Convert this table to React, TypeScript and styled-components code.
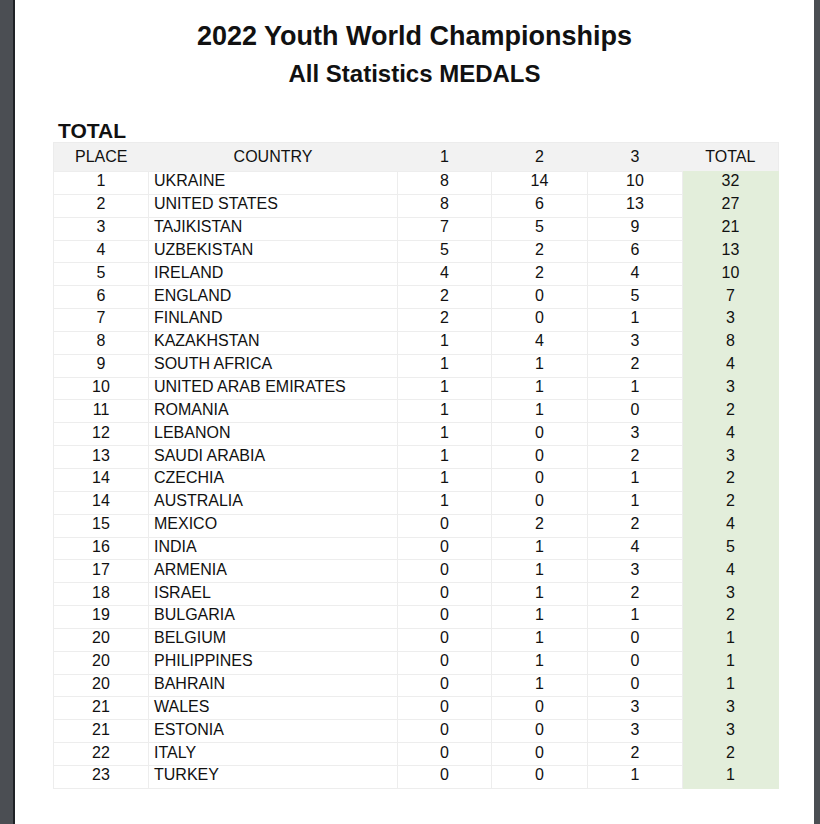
import styled, { createGlobalStyle } from "styled-components";

const GlobalStyle = createGlobalStyle`
  html, body {
    margin: 0;
    padding: 0;
    background: #4b4e53;
  }
  body {
    font-family: "Liberation Sans", Arial, sans-serif;
    color: #111;
  }
`;

type MedalRow = [string, string, number, number, number, number];

const rows: MedalRow[] = [
  ["1", "UKRAINE", 8, 14, 10, 32],
  ["2", "UNITED STATES", 8, 6, 13, 27],
  ["3", "TAJIKISTAN", 7, 5, 9, 21],
  ["4", "UZBEKISTAN", 5, 2, 6, 13],
  ["5", "IRELAND", 4, 2, 4, 10],
  ["6", "ENGLAND", 2, 0, 5, 7],
  ["7", "FINLAND", 2, 0, 1, 3],
  ["8", "KAZAKHSTAN", 1, 4, 3, 8],
  ["9", "SOUTH AFRICA", 1, 1, 2, 4],
  ["10", "UNITED ARAB EMIRATES", 1, 1, 1, 3],
  ["11", "ROMANIA", 1, 1, 0, 2],
  ["12", "LEBANON", 1, 0, 3, 4],
  ["13", "SAUDI ARABIA", 1, 0, 2, 3],
  ["14", "CZECHIA", 1, 0, 1, 2],
  ["14", "AUSTRALIA", 1, 0, 1, 2],
  ["15", "MEXICO", 0, 2, 2, 4],
  ["16", "INDIA", 0, 1, 4, 5],
  ["17", "ARMENIA", 0, 1, 3, 4],
  ["18", "ISRAEL", 0, 1, 2, 3],
  ["19", "BULGARIA", 0, 1, 1, 2],
  ["20", "BELGIUM", 0, 1, 0, 1],
  ["20", "PHILIPPINES", 0, 1, 0, 1],
  ["20", "BAHRAIN", 0, 1, 0, 1],
  ["21", "WALES", 0, 0, 3, 3],
  ["21", "ESTONIA", 0, 0, 3, 3],
  ["22", "ITALY", 0, 0, 2, 2],
  ["23", "TURKEY", 0, 0, 1, 1],
];

function App() {
  return (
    <>
      <GlobalStyle />
      <Viewer>
        <Page>
          <Title>2022 Youth World Championships</Title>
          <Subtitle>All Statistics MEDALS</Subtitle>
          <Section>
            <SectionLabel>TOTAL</SectionLabel>
            <Table>
              <colgroup>
                <col style={{ width: 95 }} />
                <col style={{ width: 249 }} />
                <col style={{ width: 94 }} />
                <col style={{ width: 96 }} />
                <col style={{ width: 95 }} />
                <col style={{ width: 96 }} />
              </colgroup>
              <thead>
                <tr>
                  <Th>PLACE</Th>
                  <Th>COUNTRY</Th>
                  <Th>1</Th>
                  <Th>2</Th>
                  <Th>3</Th>
                  <Th>TOTAL</Th>
                </tr>
              </thead>
              <tbody>
                {rows.map(([place, country, gold, silver, bronze, total], i) => (
                  <Tr key={i}>
                    <Td>{place}</Td>
                    <Td align="left">{country}</Td>
                    <Td>{gold}</Td>
                    <Td>{silver}</Td>
                    <Td>{bronze}</Td>
                    <Td highlight>{total}</Td>
                  </Tr>
                ))}
              </tbody>
            </Table>
          </Section>
        </Page>
      </Viewer>
    </>
  );
}

export default App;

const Viewer = styled.div`
  display: flex;
  min-height: 824px;
  padding-left: 13px;
  overflow: hidden;
`;

const Page = styled.div`
  width: 801px;
  flex-shrink: 0;
  background: #fff;
  border-left: 2px solid #1f2226;
  padding-top: 21px;
  min-height: 824px;
  box-sizing: border-box;
`;

const Title = styled.h1`
  margin: 0;
  text-align: center;
  font-size: 27px;
  line-height: 30px;
  font-weight: 700;
  color: #111;
`;

const Subtitle = styled.h2`
  margin: 9px 0 0;
  text-align: center;
  font-size: 24px;
  line-height: 28px;
  font-weight: 700;
  color: #111;
`;

const Section = styled.div`
  margin: 29px 38px 0;
`;

const SectionLabel = styled.div`
  padding: 3px 0 0 5px;
  font-size: 21px;
  line-height: 22px;
  font-weight: 700;
  color: #111;
`;

const Table = styled.table`
  width: 725px;
  table-layout: fixed;
  border-collapse: collapse;
  border: 1px solid #ececec;
  font-size: 16px;
`;

const Th = styled.th`
  height: 28px;
  padding: 0;
  background: #f2f2f2;
  font-weight: 400;
  text-align: center;
  color: #111;
`;

const Tr = styled.tr`
  height: 22.85px;
`;

const Td = styled.td<{ align?: string; highlight?: boolean }>`
  padding: 0 0 3px ${({ align }) => (align === "left" ? "5px" : "0")};
  text-align: ${({ align }) => align || "center"};
  border: 1px solid #ededed;
  background: ${({ highlight }) => (highlight ? "#e3eedb" : "#fff")};
  ${({ highlight }) => highlight && "border-color: #e3eedb;"}
  color: #111;
  line-height: 18px;
  white-space: nowrap;
`;
